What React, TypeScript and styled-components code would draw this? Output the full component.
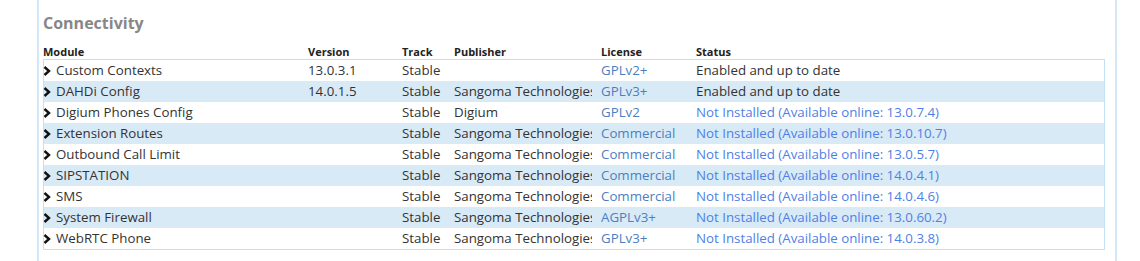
import React from 'react';
import styled, { createGlobalStyle } from 'styled-components';

const GlobalStyle = createGlobalStyle`
    body {
        margin: 0;
        background: #fff;
        font-family: "Open Sans", "Liberation Sans", sans-serif;
        color: #333;
    }
`;

const Panel = styled.div`
    margin-left: 37px;
    width: 1068px;
    height: 261px;
    border-left: 2px solid #d3e7f7;
    border-right: 2px solid #d3e7f7;
    padding: 12px 4px 0 4px;
    box-sizing: content-box;
`;

const Heading = styled.h3`
    margin: 0 0 10px 0;
    font-size: 16px;
    line-height: 22px;
    font-weight: 700;
    color: #878787;
`;

const cols = '265px 94px 52px 147px 95px 1fr';

const HeadRow = styled.div`
    display: grid;
    grid-template-columns: ${cols};
    font-size: 11px;
    font-weight: 700;
    line-height: 15px;
    color: #222;
`;

const Body = styled.div`
    border: 1px solid #c4e0f5;
    width: 1060px;
`;

const Row = styled.div<{ $striped: boolean }>`
    display: grid;
    grid-template-columns: ${cols};
    height: 21px;
    line-height: 21px;
    font-size: 13.3px;
    background: ${p => (p.$striped ? '#d9eaf7' : '#fff')};
`;

const Cell = styled.div<{ $tone?: 'license' | 'status' }>`
    white-space: nowrap;
    overflow: hidden;
    margin-left: -1px;
    color: ${p => (p.$tone === 'license' ? '#4a80c0' : p.$tone === 'status' ? '#4f7fe6' : '#333')};
`;

const PublisherCell = styled(Cell)`
    box-sizing: border-box;
    max-width: 138px;
`;

const ModuleCell = styled(Cell)`
    display: flex;
    align-items: center;
    gap: 5px;
    margin-left: -1px;
`;

const Chevron = () => (
    <svg width="8" height="10" viewBox="0 0 8 10">
        <polyline points="1.5,1 6,5 1.5,9" fill="none" stroke="#111" strokeWidth="2.4" />
    </svg>
);

type Mod = { name: string; version: string; publisher: string; license: string; status: string; installed: boolean };

const mods: Mod[] = [
    { name: 'Custom Contexts', version: '13.0.3.1', publisher: '', license: 'GPLv2+', status: 'Enabled and up to date', installed: true },
    { name: 'DAHDi Config', version: '14.0.1.5', publisher: 'Sangoma Technologies', license: 'GPLv3+', status: 'Enabled and up to date', installed: true },
    { name: 'Digium Phones Config', version: '', publisher: 'Digium', license: 'GPLv2', status: 'Not Installed (Available online: 13.0.7.4)', installed: false },
    { name: 'Extension Routes', version: '', publisher: 'Sangoma Technologies', license: 'Commercial', status: 'Not Installed (Available online: 13.0.10.7)', installed: false },
    { name: 'Outbound Call Limit', version: '', publisher: 'Sangoma Technologies', license: 'Commercial', status: 'Not Installed (Available online: 13.0.5.7)', installed: false },
    { name: 'SIPSTATION', version: '', publisher: 'Sangoma Technologies', license: 'Commercial', status: 'Not Installed (Available online: 14.0.4.1)', installed: false },
    { name: 'SMS', version: '', publisher: 'Sangoma Technologies', license: 'Commercial', status: 'Not Installed (Available online: 14.0.4.6)', installed: false },
    { name: 'System Firewall', version: '', publisher: 'Sangoma Technologies', license: 'AGPLv3+', status: 'Not Installed (Available online: 13.0.60.2)', installed: false },
    { name: 'WebRTC Phone', version: '', publisher: 'Sangoma Technologies', license: 'GPLv3+', status: 'Not Installed (Available online: 14.0.3.8)', installed: false },
];

function App() {
    return (
        <>
            <GlobalStyle />
            <Panel>
                <Heading>Connectivity</Heading>
                <HeadRow>
                    <div>Module</div>
                    <div>Version</div>
                    <div>Track</div>
                    <div>Publisher</div>
                    <div>License</div>
                    <div>Status</div>
                </HeadRow>
                <Body>
                    {mods.map((m, i) => (
                        <Row key={m.name} $striped={i % 2 === 1}>
                            <ModuleCell>
                                <Chevron />
                                {m.name}
                            </ModuleCell>
                            <Cell>{m.version}</Cell>
                            <Cell>Stable</Cell>
                            <PublisherCell>{m.publisher}</PublisherCell>
                            <Cell $tone="license">{m.license}</Cell>
                            <Cell $tone={m.installed ? undefined : 'status'}>{m.status}</Cell>
                        </Row>
                    ))}
                </Body>
            </Panel>
        </>
    );
}

export default App;
